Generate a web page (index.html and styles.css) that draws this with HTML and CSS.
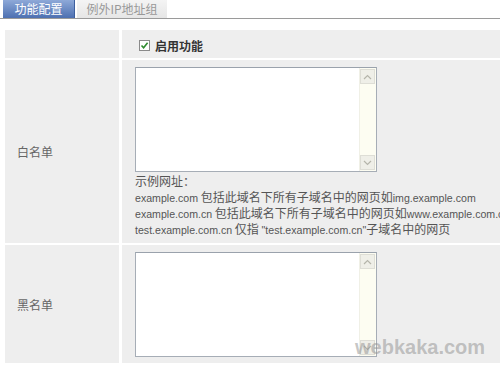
FILE: index.html
```html
<!DOCTYPE html>
<html lang="zh-CN">
<head>
    <meta charset="UTF-8">
    <title>功能配置</title>
    <link rel="stylesheet" href="styles.css">
</head>
<body>
    <div class="tabs">
        <div class="tab active">功能配置</div>
        <div class="tab">例外IP地址组</div>
    </div>

    <div class="form">
        <div class="label"></div>
        <div class="field enable">
            <span class="check">
                <svg width="9" height="9" viewBox="0 0 9 9"><path d="M1.5 4.5 L3.6 6.8 L7.6 1.8" fill="none" stroke="#2e8b2e" stroke-width="1.6"/></svg>
            </span>
            <b>启用功能</b>
        </div>

        <div class="label">白名单</div>
        <div class="field">
            <div class="box">
                <div class="box-text"></div>
                <div class="scroll">
                    <span class="arrow"><svg width="9" height="6" viewBox="0 0 9 6"><path d="M1 5 L4.5 1.5 L8 5" fill="none" stroke="#b5b5aa" stroke-width="1.2"/></svg></span>
                    <span class="arrow"><svg width="9" height="6" viewBox="0 0 9 6"><path d="M1 1 L4.5 4.5 L8 1" fill="none" stroke="#b5b5aa" stroke-width="1.2"/></svg></span>
                </div>
            </div>
            <div class="help">
                <p>示例网址：</p>
                <p><span class="en">example.com</span> 包括此域名下所有子域名中的网页如<span class="en">img.example.com</span></p>
                <p><span class="en">example.com.cn</span> 包括此域名下所有子域名中的网页如<span class="en">www.example.com.cn</span></p>
                <p><span class="en">test.example.com.cn</span> 仅指 <span class="en">"test.example.com.cn"</span>子域名中的网页</p>
            </div>
        </div>

        <div class="label">黑名单</div>
        <div class="field">
            <div class="box">
                <div class="box-text"></div>
                <div class="scroll">
                    <span class="arrow"><svg width="9" height="6" viewBox="0 0 9 6"><path d="M1 5 L4.5 1.5 L8 5" fill="none" stroke="#b5b5aa" stroke-width="1.2"/></svg></span>
                    <span class="arrow"><svg width="9" height="6" viewBox="0 0 9 6"><path d="M1 1 L4.5 4.5 L8 1" fill="none" stroke="#b5b5aa" stroke-width="1.2"/></svg></span>
                </div>
            </div>
        </div>
    </div>

    <div class="watermark">webkaka.com</div>
</body>
</html>
```

FILE: styles.css
```css
body {
    margin: 0;
    padding: 0;
    width: 500px;
    height: 368px;
    overflow: hidden;
    position: relative;
    background-color: #fff;
    font-family: "Noto Sans CJK SC", "Liberation Sans", sans-serif;
    font-size: 12px;
    color: #555;
}
.tabs {
    display: flex;
    gap: 2px;
    padding-left: 3px;
    height: 18px;
    border-bottom: 1px solid #9a9a9a;
}
.tab {
    width: 90px;
    height: 18px;
    line-height: 18px;
    text-align: center;
    color: #999;
    background: linear-gradient(#f4f4f4, #e6e6e6);
}
.tab.active {
    width: 71px;
    color: #fff;
    background: linear-gradient(#8ea9d8, #4d70b1);
    border-right: 1px solid #3d5f9e;
}
.form {
    display: grid;
    grid-template-columns: 114px 1fr;
    grid-template-rows: 28px 183px 118px;
    gap: 2px 3px;
    margin: 11px 0 0 5px;
}
.label {
    background-color: #eeeeee;
    display: flex;
    align-items: center;
    padding-left: 12px;
    color: #666;
}
.field {
    background-color: #eeeeee;
    padding: 7px 0 0 13px;
    white-space: nowrap;
    overflow: hidden;
}
.field.enable {
    display: flex;
    align-items: center;
    gap: 5px;
    padding: 3px 0 0 17px;
}
.field.enable b {
    color: #333;
    font-size: 12px;
}
.check {
    width: 9px;
    height: 9px;
    border: 1px solid #8a8a8a;
    background-color: #fff;
    display: flex;
    align-items: center;
    justify-content: center;
}
.box {
    width: 240px;
    height: 103px;
    border: 1px solid #a6adb6;
    border-top-color: #9aa2ac;
    display: flex;
    background-color: #fff;
}
.box-text {
    flex: 1;
}
.scroll {
    width: 15px;
    background-color: #fdfdf2;
    border-left: 1px solid #f0f0e6;
    display: flex;
    flex-direction: column;
    justify-content: space-between;
    padding: 1px 1px 1px 0;
}
.arrow {
    height: 13px;
    background-color: #efefe8;
    border: 1px solid #deded6;
    display: flex;
    align-items: center;
    justify-content: center;
}
.help {
    margin-top: 1px;
}
.help p {
    margin: 0;
    line-height: 16px;
    height: 16px;
}
.en {
    font-family: "Liberation Sans", sans-serif;
    font-size: 10.6px;
}
.watermark {
    position: absolute;
    left: 355px;
    top: 337px;
    font-family: "Liberation Sans", sans-serif;
    font-weight: bold;
    font-size: 20px;
    line-height: 1;
    color: rgba(150, 150, 150, 0.55);
}
```
